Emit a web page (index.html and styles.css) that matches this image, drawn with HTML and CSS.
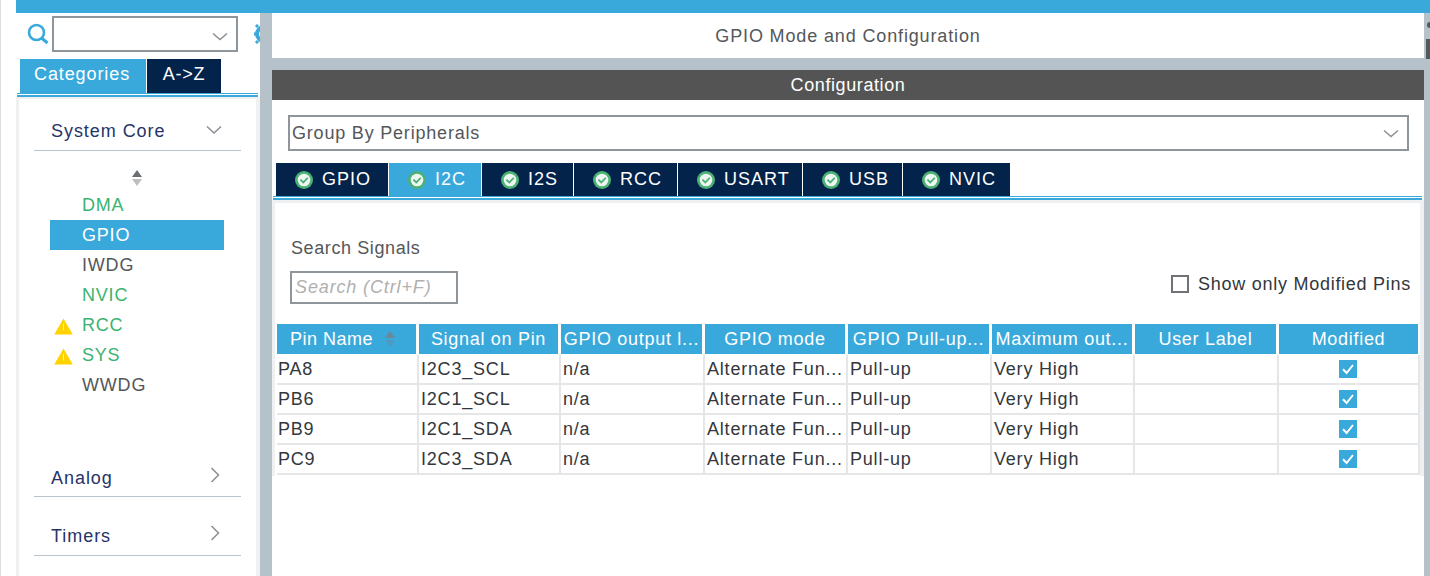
FILE: index.html
```html
<!DOCTYPE html>
<html>
<head>
    <title>GPIO Mode and Configuration</title>
    <link rel="stylesheet" href="styles.css">
</head>
<body>
    <svg width="0" height="0" class="defs">
        <symbol id="ok" viewBox="0 0 16 16">
            <circle cx="8" cy="8" r="8" fill="#4cb174"/>
            <circle cx="8" cy="8" r="5.6" fill="#eef6f1"/>
            <path d="M4.8 7.6 7.4 10.2 11.4 6" fill="none" stroke="#4cb174" stroke-width="1.6"/>
        </symbol>
        <symbol id="warn" viewBox="0 0 20 18">
            <path d="M10 0.5 19.8 17.5H0.2Z" fill="#ffd200"/>
            <path d="M10 6V13" stroke="#fff6c0" stroke-width="1"/>
        </symbol>
        <symbol id="tick" viewBox="0 0 18 18">
            <rect width="18" height="18" fill="#39a9dc"/>
            <path d="M4 9.2 7.6 13 14 5" fill="none" stroke="#fff" stroke-width="2"/>
        </symbol>
        <symbol id="sort" viewBox="0 0 12 18">
            <path d="M6 1 11 8H1Z" fill="currentColor"/>
            <path d="M6 17 11 10H1Z" fill="currentColor" opacity=".45"/>
        </symbol>
    </svg>
    <div class="topbar"></div>
    <div class="app">
        <aside class="sidebar">
            <div class="finder">
                <svg class="lens" width="22" height="22" viewBox="0 0 22 22">
                    <circle cx="9.5" cy="9.5" r="7.5" fill="none" stroke="#39a9dc" stroke-width="2.6"/>
                    <path d="M14.5 15 20.5 20" stroke="#39a9dc" stroke-width="3"/>
                </svg>
                <div class="combo">
                    <svg class="chev" width="16" height="9" viewBox="0 0 16 9"><path d="M1 1.5 8 7.5 15 1.5" fill="none" stroke="#8a8f94" stroke-width="1.5"/></svg>
                </div>
                <svg class="gear" width="6" height="20" viewBox="0 0 6 20">
                    <circle cx="10" cy="10" r="7" fill="none" stroke="#39a9dc" stroke-width="4"/>
                    <path d="M2 10H0M4 3 2 1M4 17 2 19" stroke="#39a9dc" stroke-width="3"/>
                </svg>
            </div>
            <div class="tabs side-tabs">
                <div class="tab side-tab active">Categories</div>
                <div class="tab side-tab">A-&gt;Z</div>
            </div>
            <div class="tree">
                <div class="group first">
                    <span>System Core</span>
                    <svg width="16" height="10" viewBox="0 0 16 10"><path d="M1 1.5 8 8 15 1.5" fill="none" stroke="#8a8f94" stroke-width="1.5"/></svg>
                </div>
                <svg class="tree-sort" width="12" height="18"><use href="#sort"/></svg>
                <ul class="items">
                    <li class="green">DMA</li>
                    <li class="selected">GPIO</li>
                    <li>IWDG</li>
                    <li class="green">NVIC</li>
                    <li class="green"><svg class="warn" width="19" height="17"><use href="#warn"/></svg>RCC</li>
                    <li class="green"><svg class="warn" width="19" height="17"><use href="#warn"/></svg>SYS</li>
                    <li>WWDG</li>
                </ul>
                <div class="group analog">
                    <span>Analog</span>
                    <svg width="10" height="16" viewBox="0 0 10 16"><path d="M1.5 1 8.5 8 1.5 15" fill="none" stroke="#8a8f94" stroke-width="1.5"/></svg>
                </div>
                <div class="group timers">
                    <span>Timers</span>
                    <svg width="10" height="16" viewBox="0 0 10 16"><path d="M1.5 1 8.5 8 1.5 15" fill="none" stroke="#8a8f94" stroke-width="1.5"/></svg>
                </div>
            </div>
        </aside>
        <main class="content">
            <div class="title">GPIO Mode and Configuration</div>
            <div class="config">
                <div class="config-head">Configuration</div>
                <div class="config-body">
                    <div class="select">
                        <span>Group By Peripherals</span>
                        <svg width="16" height="9" viewBox="0 0 16 9"><path d="M1 1.5 8 7.5 15 1.5" fill="none" stroke="#8a8f94" stroke-width="1.5"/></svg>
                    </div>
                    <div class="tabs periph-tabs">
                        <div class="tab periph"><svg width="18" height="18"><use href="#ok"/></svg>GPIO</div>
                        <div class="tab periph active"><svg width="18" height="18"><use href="#ok"/></svg>I2C</div>
                        <div class="tab periph"><svg width="18" height="18"><use href="#ok"/></svg>I2S</div>
                        <div class="tab periph"><svg width="18" height="18"><use href="#ok"/></svg>RCC</div>
                        <div class="tab periph"><svg width="18" height="18"><use href="#ok"/></svg>USART</div>
                        <div class="tab periph"><svg width="18" height="18"><use href="#ok"/></svg>USB</div>
                        <div class="tab periph"><svg width="18" height="18"><use href="#ok"/></svg>NVIC</div>
                    </div>
                    <div class="pane">
                        <div class="search-label">Search Signals</div>
                        <div class="search-row">
                            <div class="search-box">Search (Ctrl+F)</div>
                            <label class="only-mod"><span class="box"></span>Show only Modified Pins</label>
                        </div>
                        <div class="pins">
                            <div class="th first-th">Pin Name<svg width="12" height="18"><use href="#sort"/></svg></div>
                            <div class="th">Signal on Pin</div>
                            <div class="th">GPIO output l...</div>
                            <div class="th">GPIO mode</div>
                            <div class="th">GPIO Pull-up...</div>
                            <div class="th">Maximum out...</div>
                            <div class="th">User Label</div>
                            <div class="th">Modified</div>

                            <div class="td pin">PA8</div><div class="td">I2C3_SCL</div><div class="td">n/a</div><div class="td">Alternate Fun...</div><div class="td">Pull-up</div><div class="td">Very High</div><div class="td"></div><div class="td check"><svg width="18" height="18"><use href="#tick"/></svg></div>
                            <div class="td pin">PB6</div><div class="td">I2C1_SCL</div><div class="td">n/a</div><div class="td">Alternate Fun...</div><div class="td">Pull-up</div><div class="td">Very High</div><div class="td"></div><div class="td check"><svg width="18" height="18"><use href="#tick"/></svg></div>
                            <div class="td pin">PB9</div><div class="td">I2C1_SDA</div><div class="td">n/a</div><div class="td">Alternate Fun...</div><div class="td">Pull-up</div><div class="td">Very High</div><div class="td"></div><div class="td check"><svg width="18" height="18"><use href="#tick"/></svg></div>
                            <div class="td pin">PC9</div><div class="td">I2C3_SDA</div><div class="td">n/a</div><div class="td">Alternate Fun...</div><div class="td">Pull-up</div><div class="td">Very High</div><div class="td"></div><div class="td check"><svg width="18" height="18"><use href="#tick"/></svg></div>
                        </div>
                    </div>
                </div>
            </div>
        </main>
        <div class="edge">
            <span class="edge-dot"></span>
            <span class="edge-bar"></span>
        </div>
    </div>
</body>
</html>
```

FILE: styles.css
```css
* {
    box-sizing: border-box;
}
html, body {
    margin: 0;
    height: 576px;
    overflow: hidden;
}
body {
    font-family: "Liberation Sans", Arial, sans-serif;
    font-size: 18px;
    letter-spacing: 0.8px;
    background-color: white;
    color: #33373c;
    border-left: 1px solid #dedede;
}
.defs {
    position: absolute;
}
.topbar {
    height: 13px;
    margin-left: 15px;
    background-color: #39a9dc;
}
.app {
    display: flex;
    height: 563px;
    margin-left: 15px;
}
.sidebar {
    width: 244px;
    flex: none;
    overflow: hidden;
}
.finder {
    display: flex;
    align-items: center;
    height: 46px;
    padding: 0 0 5px 11px;
}
.lens {
    flex: none;
}
.combo {
    position: relative;
    width: 186px;
    height: 36px;
    margin-left: 3px;
    border: 2px solid #8f969b;
}
.combo .chev {
    position: absolute;
    right: 8px;
    top: 14px;
}
.gear {
    margin-left: 16px;
}
.tabs {
    display: flex;
    border-bottom: 2px solid #39a9dc;
    box-shadow: inset 0 -1px 0 white, inset 0 -2px 0 #39a9dc;
}
.tab {
    color: white;
    background-color: #03234b;
}
.tab.active {
    background-color: #39a9dc;
}
.side-tabs {
    height: 38px;
    margin: 0 2px 0 1px;
    padding-left: 3px;
}
.side-tab {
    height: 34px;
    padding: 2px 0 0 14px;
    line-height: 27px;
    margin-right: 1px;
}
.side-tab:first-child {
    width: 126px;
    letter-spacing: 0.9px;
}
.side-tab:nth-child(2) {
    width: 74px;
    text-align: center;
    padding: 2px 0 0;
}
.tree {
    height: 480px;
    padding: 0 15px;
    border-left: 3px solid #eef0f2;
    border-right: 4px solid #eef0f2;
    border-top: 2px solid #eef0f2;
}
.group {
    display: flex;
    align-items: center;
    justify-content: space-between;
    height: 41px;
    padding: 2px 19px 0 0;
    color: #263468;
    border-bottom: 1px solid #bcc4cb;
    letter-spacing: 0.95px;
}
.group span {
    margin-left: 17px;
}
.group svg {
    margin-top: -2px;
}
.first {
    margin-top: 11px;
}
.tree-sort {
    display: block;
    margin: 18px 0 0 97px;
    color: #6a6f74;
}
.items {
    list-style: none;
    margin: 3px 0 0;
    padding: 0;
}
.items li {
    display: flex;
    align-items: center;
    height: 30px;
    margin: 0 17px 0 16px;
    padding: 1px 0 0 32px;
    position: relative;
    color: #54575a;
}
.items .green {
    color: #3cb371;
}
.items .selected {
    background-color: #39a9dc;
    color: white;
}
.warn {
    position: absolute;
    left: 4px;
    top: 8px;
}
.analog {
    margin-top: 56px;
    padding-top: 4px;
}
.timers {
    margin-top: 18px;
    padding-top: 3px;
}
.analog svg, .timers svg {
    margin-right: 2px;
    margin-top: -7px;
}
.content {
    flex: none;
    width: 1164px;
    margin-left: 0;
    border-left: 12px solid #b6c2c9;
    background-color: #b6c2c9;
}
.title {
    height: 45px;
    line-height: 46px;
    text-align: center;
    background-color: white;
    color: #54575a;
    letter-spacing: 0.86px;
}
.config {
    margin-top: 12px;
}
.config-head {
    height: 30px;
    line-height: 30px;
    text-align: center;
    color: white;
    background-color: #545454;
    letter-spacing: 0.6px;
}
.config-body {
    height: 476px;
    background-color: white;
    padding-top: 15px;
}
.select {
    display: flex;
    align-items: center;
    justify-content: space-between;
    height: 36px;
    margin: 0 15px 0 16px;
    padding: 1px 8px 0 2px;
    border: 2px solid #8f969b;
    color: #54575a;
}
.periph-tabs {
    display: grid;
    grid-template-columns: 112px 92px 91px 103px 124px 99px 107px;
    column-gap: 1px;
    height: 37px;
    margin: 12px 2px 0 1px;
    padding-left: 3px;
}
.periph {
    display: flex;
    align-items: center;
    gap: 9px;
    height: 33px;
    padding-left: 19px;
    letter-spacing: 1px;
}
.pane {
    height: 276px;
    padding: 35px 0 0 2px;
    border-top: 3px solid #eef0f2;
    border-left: 3px solid #eef0f2;
    border-right: 4px solid #eef0f2;
}
.search-label {
    margin-left: 14px;
    color: #54575a;
    line-height: 20px;
    letter-spacing: 0.6px;
}
.search-row {
    display: flex;
    justify-content: space-between;
    align-items: center;
    margin: 13px 9px 0 13px;
}
.search-box {
    width: 168px;
    height: 33px;
    line-height: 29px;
    padding-left: 3px;
    border: 2px solid #8f969b;
    font-style: italic;
    color: #b0b0b0;
    letter-spacing: 0.87px;
}
.only-mod {
    display: flex;
    align-items: center;
    margin-top: -7px;
    letter-spacing: 0.73px;
}
.box {
    width: 18px;
    height: 18px;
    margin-right: 9px;
    border: 2px solid #6f7377;
}
.pins {
    display: grid;
    grid-template-columns: 142px 142px 144px 143px 144px 143px 144px 141px;
    margin-top: 20px;
}
.th {
    height: 30px;
    margin: 0 3px 1px 0;
    line-height: 30px;
    text-align: center;
    white-space: nowrap;
    color: white;
    background-color: #39a9dc;
    overflow: hidden;
    letter-spacing: 0.7px;
}
.th:nth-child(8) {
    margin-right: 2px;
}
.first-th {
    padding-right: 7px;
    letter-spacing: 0.5px;
}
.th svg {
    margin-left: 11px;
    vertical-align: -3px;
    color: #6d8898;
}
.td {
    height: 30px;
    line-height: 28px;
    padding-left: 2px;
    white-space: nowrap;
    border-bottom: 2px solid #e4e6e8;
    border-right: 2px solid #e4e6e8;
}
.pin {
    padding-left: 1px;
}
.check {
    display: flex;
    align-items: center;
    justify-content: center;
    padding: 0 2px 0 0;
}
.edge {
    flex: 1;
    position: relative;
    background-color: #b6c2c9;
}
.edge-dot {
    position: absolute;
    left: 3px;
    top: 9px;
    width: 3px;
    height: 6px;
    border-radius: 3px 0 0 3px;
    background-color: #55595c;
}
.edge-bar {
    position: absolute;
    left: 2px;
    top: 26px;
    width: 4px;
    height: 20px;
    background-color: #55595c;
}
```
